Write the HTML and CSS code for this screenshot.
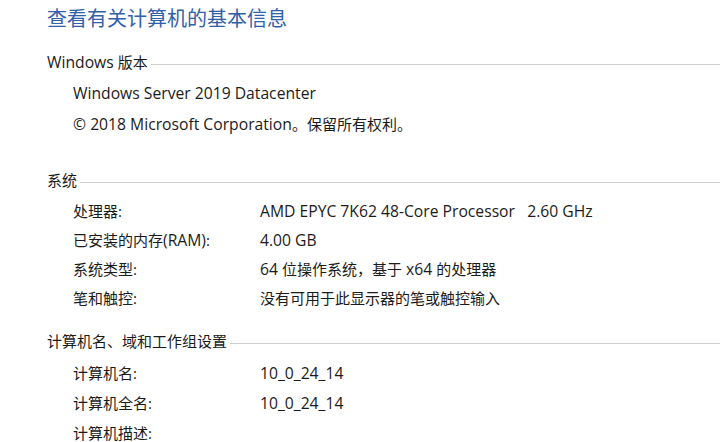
FILE: index.html
```
<!DOCTYPE html>
<html lang="zh-CN">
<head>
<meta charset="utf-8">
<link rel="stylesheet" href="styles.css">
</head>
<body>
<div class="page">
  <h1 class="title">查看有关计算机的基本信息</h1>

  <div class="section-head s1"><span><span class="en">Windows </span>版本</span></div>
  <div class="block version">
    <div class="line en">Windows Server 2019 Datacenter</div>
    <div class="line"><span class="en">© 2018 Microsoft Corporation</span>。保留所有权利。</div>
  </div>

  <div class="section-head s2"><span>系统</span></div>
  <div class="block grid sys">
    <div class="label">处理器:</div><div class="value en">AMD EPYC 7K62 48-Core Processor   2.60 GHz</div>
    <div class="label">已安装的内存<span class="en">(RAM)</span>:</div><div class="value en">4.00 GB</div>
    <div class="label">系统类型:</div><div class="value"><span class="en">64 </span>位操作系统，基于<span class="en"> x64 </span>的处理器</div>
    <div class="label">笔和触控:</div><div class="value">没有可用于此显示器的笔或触控输入</div>
  </div>

  <div class="section-head s3"><span>计算机名、域和工作组设置</span></div>
  <div class="block grid comp">
    <div class="label">计算机名:</div><div class="value en">10_0_24_14</div>
    <div class="label">计算机全名:</div><div class="value en">10_0_24_14</div>
    <div class="label">计算机描述:</div><div class="value"></div>
  </div>
</div>
</body>
</html>
```

FILE: styles.css
```
html, body {
  margin: 0;
  padding: 0;
  background: #ffffff;
  overflow: hidden;
}
body {
  width: 720px;
  height: 442px;
  font-family: "Open Sans", "Noto Sans CJK SC", sans-serif;
  font-size: 15px;
  color: #1b1b1b;
}
.en {
  font-size: 15.7px;
}
.page {
  padding-left: 47px;
}
.title {
  margin: 4px 0 0;
  font-size: 20px;
  line-height: 28px;
  font-weight: normal;
  color: #3060aa;
  font-family: "Noto Sans CJK SC", sans-serif;
}
.section-head {
  display: flex;
  align-items: center;
  height: 22px;
  line-height: 22px;
}
.section-head::after {
  content: "";
  flex: 1;
  height: 1px;
  background: #cfcfcf;
  margin-left: 3px;
  margin-top: 5px;
}
.s1 { margin-top: 19px; }
.s2 { margin-top: 29px; }
.s3 { margin-top: 17px; }
.block {
  padding-left: 26px;
}
.version { margin-top: 5px; }
.version .line { line-height: 31px; height: 31px; }
.grid {
  display: grid;
  grid-template-columns: 187px auto;
}
.sys { margin-top: 6px; }
.sys > div { line-height: 29px; height: 29px; }
.comp { margin-top: 6px; }
.comp > div { line-height: 30px; height: 30px; }
.value { white-space: pre; }
```
